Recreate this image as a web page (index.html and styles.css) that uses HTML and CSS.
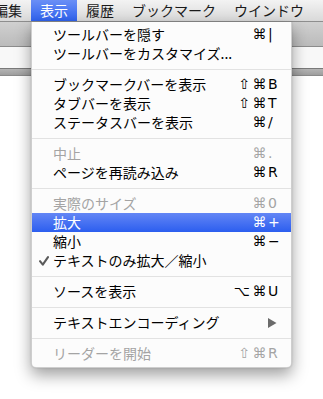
FILE: index.html
```html
<!DOCTYPE html>
<html lang="ja">
<head>
  <meta charset="UTF-8">
  <title>表示メニュー</title>
  <link rel="stylesheet" href="styles.css">
</head>
<body>
  <div class="screen">
    <div class="menubar">
      <span class="mb-item mb-first">編集</span>
      <span class="mb-item mb-open">表示</span>
      <span class="mb-item">履歴</span>
      <span class="mb-item">ブックマーク</span>
      <span class="mb-item">ウインドウ</span>
    </div>
    <div class="toolbar"></div>
    <div class="fieldbar"></div>
    <div class="tabbar"></div>
    <div class="page"></div>

    <!-- 表示メニュー -->
    <div class="menu">
      <div class="item">
        <span class="check"></span>
        <span class="label">ツールバーを隠す</span>
        <span class="keys"><span class="mod"></span><span class="cmd">⌘</span><span class="key">|</span></span>
      </div>
      <div class="item">
        <span class="check"></span>
        <span class="label">ツールバーをカスタマイズ...</span>
      </div>
      <div class="sep"></div>
      <div class="item">
        <span class="check"></span>
        <span class="label">ブックマークバーを表示</span>
        <span class="keys"><span class="mod">⇧</span><span class="cmd">⌘</span><span class="key">B</span></span>
      </div>
      <div class="item">
        <span class="check"></span>
        <span class="label">タブバーを表示</span>
        <span class="keys"><span class="mod">⇧</span><span class="cmd">⌘</span><span class="key">T</span></span>
      </div>
      <div class="item">
        <span class="check"></span>
        <span class="label">ステータスバーを表示</span>
        <span class="keys"><span class="mod"></span><span class="cmd">⌘</span><span class="key">/</span></span>
      </div>
      <div class="sep"></div>
      <div class="item disabled">
        <span class="check"></span>
        <span class="label">中止</span>
        <span class="keys"><span class="mod"></span><span class="cmd">⌘</span><span class="key">.</span></span>
      </div>
      <div class="item">
        <span class="check"></span>
        <span class="label">ページを再読み込み</span>
        <span class="keys"><span class="mod"></span><span class="cmd">⌘</span><span class="key">R</span></span>
      </div>
      <div class="sep"></div>
      <div class="item disabled">
        <span class="check"></span>
        <span class="label">実際のサイズ</span>
        <span class="keys"><span class="mod"></span><span class="cmd">⌘</span><span class="key">0</span></span>
      </div>
      <div class="item selected">
        <span class="check"></span>
        <span class="label">拡大</span>
        <span class="keys"><span class="mod"></span><span class="cmd">⌘</span><span class="key">+</span></span>
      </div>
      <div class="item">
        <span class="check"></span>
        <span class="label">縮小</span>
        <span class="keys"><span class="mod"></span><span class="cmd">⌘</span><span class="key">−</span></span>
      </div>
      <div class="item">
        <span class="check">
          <svg width="10" height="10" viewBox="0 0 10 10"><path d="M1 5.2 L3.8 8.6 L9 1.2" fill="none" stroke="#5a5a5a" stroke-width="2.1" stroke-linecap="round" stroke-linejoin="round"/></svg>
        </span>
        <span class="label">テキストのみ拡大／縮小</span>
      </div>
      <div class="sep"></div>
      <div class="item">
        <span class="check"></span>
        <span class="label">ソースを表示</span>
        <span class="keys"><span class="mod">⌥</span><span class="cmd">⌘</span><span class="key">U</span></span>
      </div>
      <div class="sep"></div>
      <div class="item">
        <span class="check"></span>
        <span class="label">テキストエンコーディング</span>
        <span class="submenu">
          <svg width="9" height="10" viewBox="0 0 9 10"><path d="M0 0 L8.5 5 L0 10 Z" fill="#6b6b6b"/></svg>
        </span>
      </div>
      <div class="sep"></div>
      <div class="item disabled">
        <span class="check"></span>
        <span class="label">リーダーを開始</span>
        <span class="keys"><span class="mod">⇧</span><span class="cmd">⌘</span><span class="key">R</span></span>
      </div>
    </div>
  </div>
</body>
</html>
```

FILE: styles.css
```css
html, body {
  margin: 0;
  padding: 0;
}

body {
  width: 323px;
  height: 399px;
  overflow: hidden;
  background: #ffffff;
  font-family: "Noto Sans CJK JP", "Noto Sans", sans-serif;
  color: #111;
}

.screen {
  position: relative;
  width: 323px;
  height: 399px;
  overflow: hidden;
  display: flex;
  flex-direction: column;
}

/* メニューバー */
.menubar {
  height: 21px;
  flex-shrink: 0;
  display: flex;
  align-items: stretch;
  background: linear-gradient(#f3f3f3, #d9d9d9);
  border-bottom: 1px solid #8e8e8e;
  white-space: nowrap;
}

.mb-item {
  padding: 0 9px;
  font-size: 14px;
  line-height: 21px;
  color: #1a1a1a;
}

.mb-first {
  margin-left: -15px;
}

.mb-open {
  background: linear-gradient(#6a8ff6, #2f62ee);
  color: #fff;
}

/* 背後のウインドウ */
.toolbar {
  height: 24px;
  flex-shrink: 0;
  background: linear-gradient(#d0d0d0, #bbbbbb);
  border-bottom: 1px solid #8c8c8c;
}

.fieldbar {
  height: 21px;
  flex-shrink: 0;
  background: #f8f8f8;
  border-bottom: 1px solid #7a7a7a;
}

.tabbar {
  height: 6px;
  flex-shrink: 0;
  background: linear-gradient(#b4b4b4, #9e9e9e);
  border-bottom: 1px solid #8a8a8a;
}

.page {
  flex: 1;
  background: #ffffff;
}

/* プルダウンメニュー */
.menu {
  position: absolute;
  left: 31px;
  top: 22px;
  width: 261px;
  padding: 3px 0 4px;
  background: #fcfcfc;
  border: 1px solid rgba(0, 0, 0, 0.18);
  border-top: none;
  box-sizing: border-box;
  border-radius: 0 0 5px 5px;
  box-shadow: 0 7px 16px rgba(0, 0, 0, 0.38), 0 0 2px rgba(0, 0, 0, 0.15);
}

.item {
  height: 19px;
  display: flex;
  align-items: center;
  padding: 0 13px 0 6px;
  font-size: 14px;
  color: #000;
  white-space: nowrap;
}

.item.disabled {
  color: #a4a4a4;
}

.item.selected {
  background: linear-gradient(#6386f5, #2c5eef);
  color: #fff;
}

.check {
  width: 14px;
  display: flex;
  align-items: center;
  justify-content: flex-start;
  padding-left: 1px;
}

.label {
  flex: 1;
  line-height: 19px;
}

.keys {
  display: flex;
  align-items: center;
  font-family: "DejaVu Sans", sans-serif;
  font-size: 14px;
  line-height: 19px;
}

.mod {
  min-width: 14px;
  text-align: right;
}

.cmd {
  width: 15px;
  margin-left: 2px;
  text-align: center;
}

.key {
  width: 10px;
  margin-left: 1px;
  text-align: left;
}

.submenu {
  display: flex;
  align-items: center;
  padding-right: 1px;
}

.sep {
  height: 12px;
  display: flex;
  align-items: center;
}

.sep::before {
  content: "";
  display: block;
  width: 100%;
  height: 1px;
  background: #e2e2e2;
}
```
